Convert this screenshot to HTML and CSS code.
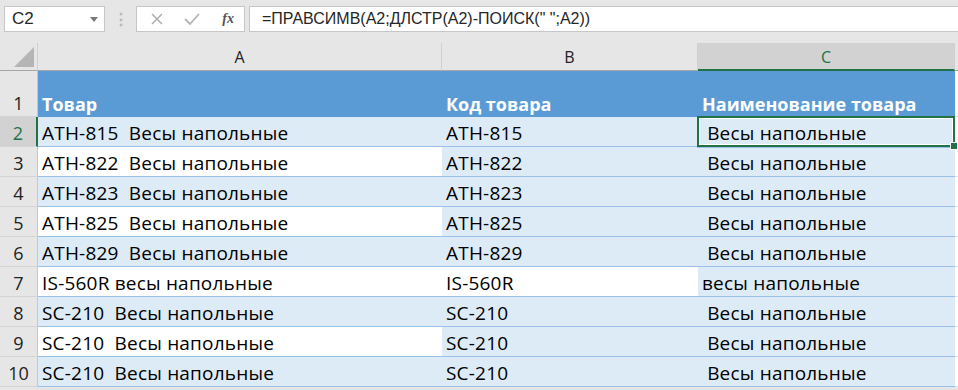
FILE: index.html
```html
<!DOCTYPE html>
<html lang="ru">
<head>
    <meta charset="utf-8">
    <link rel="stylesheet" href="styles.css">
</head>
<body>
    <div class="formula-bar">
        <div class="name-box">
            <span>C2</span>
            <span class="name-arrow"></span>
        </div>
        <div class="grip">⋮</div>
        <div class="fx-box">
            <svg class="fx-icon" width="14" height="14" viewBox="0 0 14 14"><path d="M2 2 L12 12 M12 2 L2 12" stroke="#a8a8a8" stroke-width="1.4" fill="none"/></svg>
            <svg class="fx-icon" width="16" height="14" viewBox="0 0 16 14"><path d="M1 7 L6 12 L15 2" stroke="#b4b4b4" stroke-width="1.8" fill="none"/></svg>
            <span class="fx-label">fx</span>
        </div>
        <div class="formula">=ПРАВСИМВ(A2;ДЛСТР(A2)-ПОИСК(" ";A2))</div>
    </div>

    <div class="sheet">
        <div class="corner"><span class="corner-tri"></span></div>
        <div class="col-head">A</div>
        <div class="col-head">B</div>
        <div class="col-head col-active">C</div>
        <div class="col-head col-rest"></div>

        <div class="row-head row-tall">1</div>
        <div class="cell th">Товар</div>
        <div class="cell th">Код товара</div>
        <div class="cell th">Наименование товара</div>
        <div class="cell blank"></div>

        <div class="row-head row-active">2</div>
        <div class="cell band">ATH-815  Весы напольные</div>
        <div class="cell band">ATH-815</div>
        <div class="cell band selected"> Весы напольные</div>
        <div class="cell blank"></div>

        <div class="row-head">3</div>
        <div class="cell">ATH-822  Весы напольные</div>
        <div class="cell band">ATH-822</div>
        <div class="cell band"> Весы напольные</div>
        <div class="cell blank"></div>

        <div class="row-head">4</div>
        <div class="cell band">ATH-823  Весы напольные</div>
        <div class="cell band">ATH-823</div>
        <div class="cell band"> Весы напольные</div>
        <div class="cell blank"></div>

        <div class="row-head">5</div>
        <div class="cell">ATH-825  Весы напольные</div>
        <div class="cell band">ATH-825</div>
        <div class="cell band"> Весы напольные</div>
        <div class="cell blank"></div>

        <div class="row-head">6</div>
        <div class="cell band">ATH-829  Весы напольные</div>
        <div class="cell band">ATH-829</div>
        <div class="cell band"> Весы напольные</div>
        <div class="cell blank"></div>

        <div class="row-head">7</div>
        <div class="cell">IS-560R весы напольные</div>
        <div class="cell">IS-560R</div>
        <div class="cell band">весы напольные</div>
        <div class="cell blank"></div>

        <div class="row-head">8</div>
        <div class="cell band">SC-210  Весы напольные</div>
        <div class="cell band">SC-210</div>
        <div class="cell band"> Весы напольные</div>
        <div class="cell blank"></div>

        <div class="row-head">9</div>
        <div class="cell">SC-210  Весы напольные</div>
        <div class="cell band">SC-210</div>
        <div class="cell band"> Весы напольные</div>
        <div class="cell blank"></div>

        <div class="row-head">10</div>
        <div class="cell band">SC-210  Весы напольные</div>
        <div class="cell band">SC-210</div>
        <div class="cell band"> Весы напольные</div>
        <div class="cell blank"></div>
    </div>
</body>
</html>
```

FILE: styles.css
```css
body {
    margin: 0;
    background: #e6e6e6;
    font-family: "Open Sans", "Noto Sans", sans-serif;
    overflow: hidden;
}

/* formula bar */
.formula-bar {
    height: 43px;
    display: flex;
    align-items: flex-start;
    padding-top: 6px;
    box-sizing: border-box;
}

.name-box {
    width: 101px;
    height: 26px;
    margin-left: 4px;
    box-sizing: border-box;
    border: 1px solid #c6c6c6;
    background: #fff;
    display: flex;
    align-items: center;
    justify-content: space-between;
    padding: 0 6px 0 7px;
    font-family: "Liberation Sans", sans-serif;
    font-size: 17px;
    color: #262626;
}

.name-arrow {
    width: 0;
    height: 0;
    border-left: 4px solid transparent;
    border-right: 4px solid transparent;
    border-top: 5px solid #7a7a7a;
}

.grip {
    width: 31px;
    text-align: center;
    color: #b8b8b8;
    font-size: 16px;
    line-height: 26px;
    font-weight: bold;
}

.fx-box {
    width: 109px;
    height: 26px;
    box-sizing: border-box;
    border: 1px solid #c6c6c6;
    background: #fff;
    display: flex;
    align-items: center;
    padding: 0 10px 0 13px;
    gap: 20px;
}

.fx-label {
    margin-left: auto;
    font-family: "Liberation Serif", serif;
    font-style: italic;
    font-weight: bold;
    font-size: 14px;
    color: #555;
}

.formula {
    flex: 1;
    height: 26px;
    margin-left: 4px;
    box-sizing: border-box;
    border: 1px solid #c6c6c6;
    border-right: none;
    background: #fff;
    padding-left: 12px;
    font-family: "Liberation Sans", sans-serif;
    font-size: 16px;
    line-height: 24px;
    color: #262626;
}

/* sheet grid */
.sheet {
    display: grid;
    grid-template-columns: 38px 404px 256px 257px 1fr;
    grid-template-rows: 28px 46px;
    grid-auto-rows: 30px;
}

.corner {
    border-right: 1px solid #d0d0d0;
    border-bottom: 1px solid #a6a6a6;
    position: relative;
}

.corner-tri {
    position: absolute;
    right: 3px;
    bottom: 3px;
    width: 0;
    height: 0;
    border-left: 20px solid transparent;
    border-bottom: 20px solid #b5b5b5;
}

.col-head {
    display: flex;
    align-items: center;
    justify-content: center;
    border-right: 1px solid #d0d0d0;
    border-bottom: 1px solid #a6a6a6;
    font-size: 16px;
    color: #222;
    padding-top: 1px;
}

.col-active {
    background: #d2d2d2;
    border-bottom: 2px solid #217346;
    color: #217346;
}

.col-rest {
    border-right: none;
}

.row-head {
    display: flex;
    align-items: flex-end;
    justify-content: center;
    padding-bottom: 1px;
    box-sizing: border-box;
    border-right: 1px solid #c8c8c8;
    border-bottom: 1px solid #d4d4d4;
    font-size: 18px;
    color: #222;
}

.row-active {
    background: #d2d2d2;
    color: #217346;
    border-right: 2px solid #217346;
}

.cell {
    background: #fff;
    border-bottom: 1px solid #9bc2e6;
    box-sizing: border-box;
    display: flex;
    align-items: flex-end;
    padding: 0 0 0 4px;
    font-size: 19px;
    letter-spacing: 0.2px;
    line-height: 26px;
    color: #000;
    white-space: pre;
}

.band {
    background: #ddebf7;
}

.th {
    background: #5b9bd5;
    border-bottom: none;
    color: #fff;
    font-weight: bold;
    font-size: 18px;
    letter-spacing: 0;
    padding-bottom: 0;
}

.blank {
    background: #fff;
    border-bottom: 1px solid #e2e2e2;
}

.selected {
    position: relative;
    box-shadow: inset 0 0 0 2px #217346, inset 0 0 0 3px #fff;
    margin: -1px 0 -1px -1px;
    padding-left: 5px;
    padding-bottom: 1px;
}

.selected::after {
    content: "";
    position: absolute;
    right: -3px;
    bottom: -3px;
    width: 6px;
    height: 6px;
    background: #217346;
    border: 1px solid #fff;
}
```
